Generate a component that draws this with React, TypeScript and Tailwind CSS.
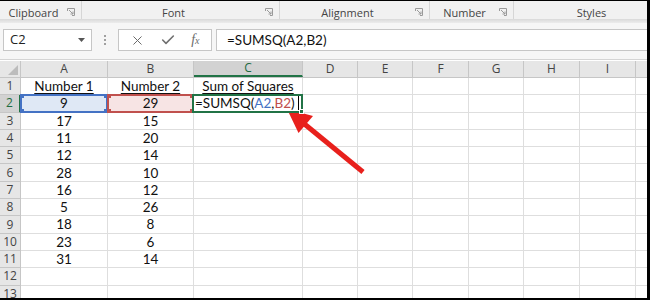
import { X, Check } from 'lucide-react'

const COLS = [
  { label: 'A', w: 'w-[87px]' },
  { label: 'B', w: 'w-[86px]' },
  { label: 'C', w: 'w-[109px]' },
  { label: 'D', w: 'w-[55px]' },
  { label: 'E', w: 'w-[55px]' },
  { label: 'F', w: 'w-[56px]' },
  { label: 'G', w: 'w-[55px]' },
  { label: 'H', w: 'w-[56px]' },
  { label: 'I', w: 'w-[56px]' },
  { label: '', w: 'w-[40px]' },
]

const DATA: (string | number)[][] = [
  ['Number 1', 'Number 2', 'Sum of Squares'],
  [9, 29],
  [17, 15],
  [11, 20],
  [12, 14],
  [28, 10],
  [16, 12],
  [5, 26],
  [18, 8],
  [23, 6],
  [31, 14],
  [],
  [],
]

const GROUPS = [
  { label: 'Clipboard', w: 'w-[82px]', launcher: true },
  { label: 'Font', w: 'w-[198px]', launcher: true },
  { label: 'Alignment', w: 'w-[150px]', launcher: true },
  { label: 'Number', w: 'w-[84px]', launcher: true },
  { label: 'Styles', w: 'w-[156px]', launcher: false },
]

const ui = "font-['Open_Sans','Noto_Sans',sans-serif]"
const cellFont = "font-['Lato','Open_Sans',sans-serif]"

function Launcher() {
  return (
    <svg width="8" height="8" viewBox="0 0 8 8" className="text-[#9a9a9a]">
      <path d="M0.5 3V0.5H7.5V7.5H5" fill="none" stroke="currentColor" strokeWidth="1" />
      <path d="M2 2L6 6M6 3.5V6H3.5" fill="none" stroke="currentColor" strokeWidth="1" />
    </svg>
  )
}

function Handles({ color }: { color: string }) {
  return (
    <>
      <span className={`absolute -left-[2px] -top-[2px] w-[4px] h-[4px] ${color}`} />
      <span className={`absolute -right-[2px] -top-[2px] w-[4px] h-[4px] ${color}`} />
      <span className={`absolute -left-[2px] -bottom-[2px] w-[4px] h-[4px] ${color}`} />
      <span className={`absolute -right-[2px] -bottom-[2px] w-[4px] h-[4px] ${color}`} />
    </>
  )
}

export default function App() {
  return (
    <div className="relative w-[650px] h-[300px] overflow-hidden bg-white border-t border-black border-r-[3px] border-b-2">
      {/* ribbon group labels */}
      <div className={`flex h-[18px] bg-[#f1f1f1] ${ui}`}>
        {GROUPS.map(g => (
          <div key={g.label} className={`${g.w} shrink-0 flex items-center pt-[4px] border-r border-[#d6d6d6]`}>
            <span className="flex-1 text-center text-[11px] leading-none text-[#444]">{g.label}</span>
            {g.launcher && <span className="w-[14px] flex items-center"><Launcher /></span>}
          </div>
        ))}
      </div>
      <div className="h-[4px] bg-gradient-to-b from-[#d9d9d9] to-[#ececec]" />

      {/* formula bar */}
      <div className={`flex h-[37px] pt-[6px] bg-[#f6f6f6] border-b border-[#d4d4d4] ${ui}`}>
        <div className="ml-[3px] w-[89px] h-[22px] bg-white border border-[#c6c6c6] flex items-center justify-between pl-[6px] pr-[6px]">
          <span className="text-[13px] text-[#222]">C2</span>
          <svg width="7" height="4" viewBox="0 0 7 4"><path d="M0 0H7L3.5 4Z" fill="#555" /></svg>
        </div>
        <div className="w-[26px] h-[22px] flex flex-col items-center justify-center gap-[2px]">
          <span className="w-[2px] h-[2px] bg-[#a0a0a0]" />
          <span className="w-[2px] h-[2px] bg-[#a0a0a0]" />
          <span className="w-[2px] h-[2px] bg-[#a0a0a0]" />
        </div>
        <div className="w-[94px] h-[22px] bg-white border border-[#c6c6c6] flex items-center justify-around px-[4px] text-[#6b6b6b]">
          <X size={15} strokeWidth={1.6} />
          <Check size={16} strokeWidth={2.4} className="text-[#707070]" />
          <span className="font-['Liberation_Serif',serif] italic text-[14px] leading-none">f<span className="text-[10px]">x</span></span>
        </div>
        <div className={`ml-[4px] flex-1 h-[22px] bg-white border-y border-l border-[#c6c6c6] flex items-center pl-[10px] text-[13.5px] text-[#111] ${cellFont}`}>
          =SUMSQ(A2,B2)
        </div>
      </div>
      <div className="h-[1px]" />

      {/* column headers */}
      <div className={`flex h-[17px] bg-[#e6e6e6] border-b border-[#c6c6c6] ${ui}`}>
        <div className="w-[21px] shrink-0 relative border-r border-[#c6c6c6]">
          <svg width="10" height="10" viewBox="0 0 10 10" className="absolute right-[2px] bottom-[2px]">
            <path d="M10 0V10H0Z" fill="#bcbcbc" />
          </svg>
        </div>
        {COLS.map(c => (
          <div
            key={c.w + c.label}
            className={`${c.w} shrink-0 flex items-center justify-center text-[12px] border-r border-[#c6c6c6] ${
              c.label === 'C' ? 'bg-[#d2d2d2] text-[#1e6b41] border-b-2 border-b-[#217346]' : 'text-[#444]'
            }`}
          >
            {c.label}
          </div>
        ))}
      </div>

      {/* rows */}
      {DATA.map((row, i) => {
        const r = i + 1
        return (
          <div key={r} className="flex h-[17.3px]">
            <div
              className={`w-[21px] shrink-0 flex items-center justify-center text-[12px] border-b border-r ${ui} ${
                r === 2
                  ? 'bg-[#d2d2d2] text-[#1e6b41] border-b-[#c6c6c6] border-r-2 border-r-[#217346]'
                  : 'bg-[#e6e6e6] text-[#444] border-[#c6c6c6]'
              }`}
            >
              {r}
            </div>
            {COLS.map((c, ci) => {
              const v = row[ci]
              const header = r === 1 && ci < 3
              let extra = ''
              if (r === 2 && ci === 0) extra = 'bg-[#dfe8f5]'
              if (r === 2 && ci === 1) extra = 'bg-[#f7e4e4]'
              return (
                <div
                  key={c.w + c.label}
                  className={`${c.w} shrink-0 relative flex items-center justify-center border-r border-b border-[#dedede] text-[13.5px] text-[#111] ${cellFont} ${extra}`}
                >
                  {r === 2 && ci === 0 && (
                    <span className="absolute -inset-[1px] border-2 border-[#4472c4]"><Handles color="bg-[#4472c4]" /></span>
                  )}
                  {r === 2 && ci === 1 && (
                    <span className="absolute -inset-[1px] border-2 border-[#c0504d]"><Handles color="bg-[#c0504d]" /></span>
                  )}
                  {r === 2 && ci === 2 ? (
                    <span className="absolute -inset-[1px] -left-[2px] border-2 border-[#217346] flex items-center pl-[1px] whitespace-nowrap z-10 bg-white">
                      =SUMSQ(<span className="text-[#4472c4]">A2</span>,<span className="text-[#c0504d]">B2</span>)
                      <span className="ml-[3px] w-[1px] h-[14px] bg-black" />
                      <span className="absolute -right-[3px] -bottom-[3px] w-[5px] h-[5px] bg-[#217346] border border-white" />
                    </span>
                  ) : v !== undefined ? (
                    <span className={header ? 'underline underline-offset-2 decoration-1' : ''}>{v}</span>
                  ) : null}
                </div>
              )
            })}
          </div>
        )
      })}

      {/* red arrow callout */}
      <svg className="absolute left-0 top-0 pointer-events-none" width="650" height="300">
        <line x1="363" y1="171" x2="302" y2="121" stroke="#e8201c" strokeWidth="5" />
        <path d="M287 108L313 115L298.5 132Z" fill="#e8201c" />
      </svg>
    </div>
  )
}
